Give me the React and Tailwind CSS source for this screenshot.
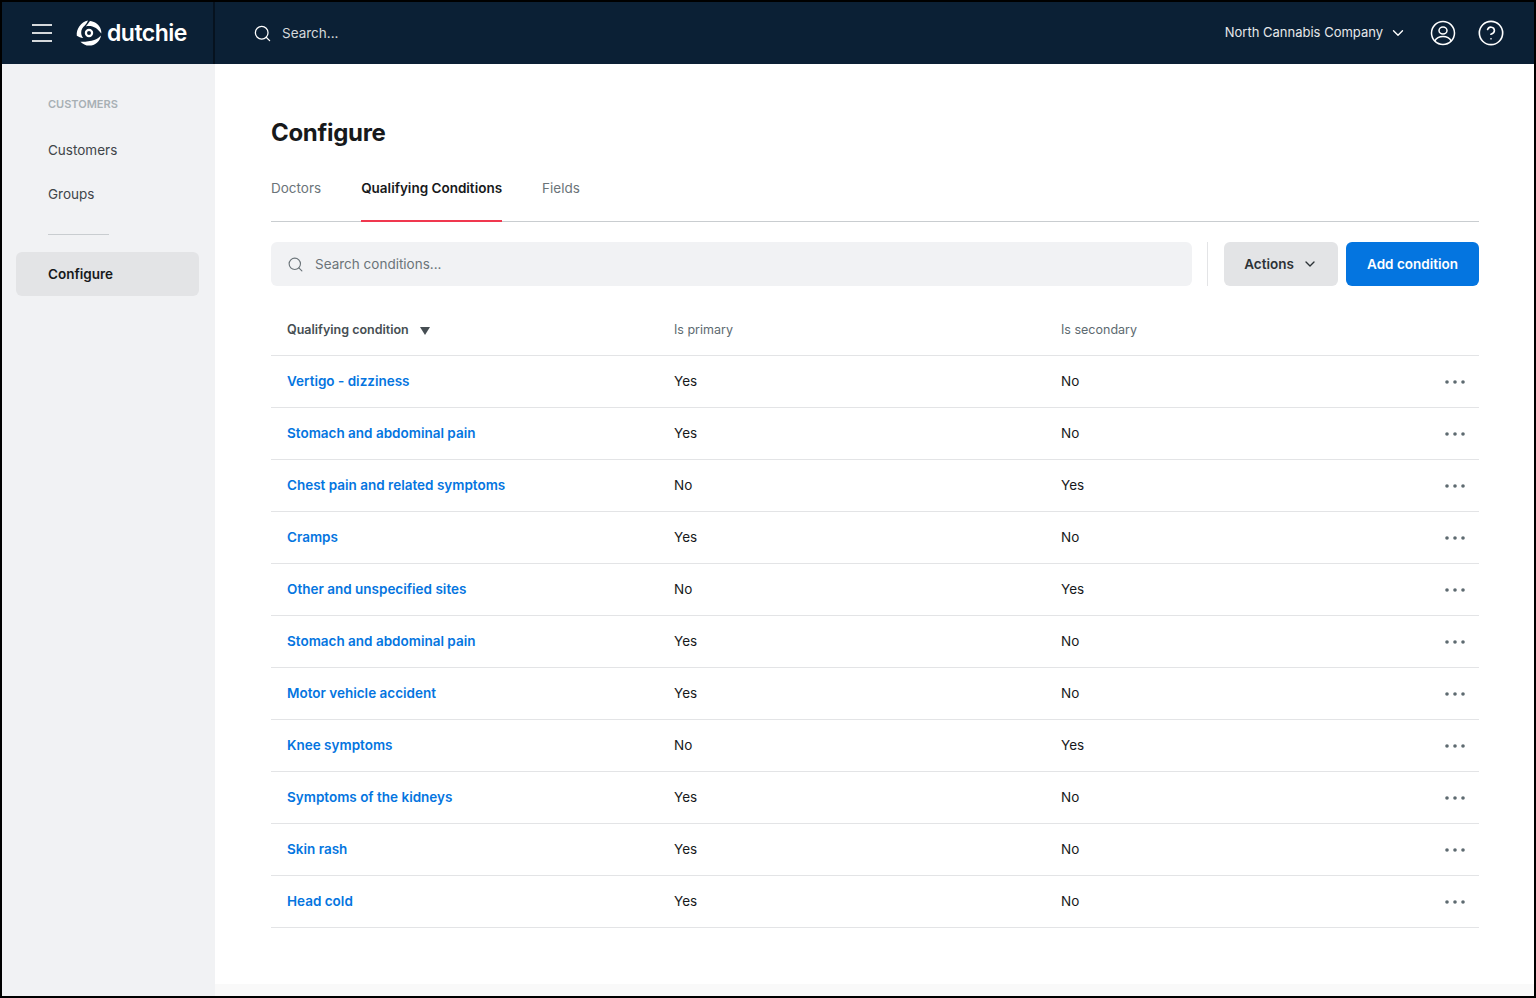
import React from 'react'
import { Search, ChevronDown, CircleHelp } from 'lucide-react'

const rows = [
  ['Vertigo - dizziness', 'Yes', 'No'],
  ['Stomach and abdominal pain', 'Yes', 'No'],
  ['Chest pain and related symptoms', 'No', 'Yes'],
  ['Cramps', 'Yes', 'No'],
  ['Other and unspecified sites', 'No', 'Yes'],
  ['Stomach and abdominal pain', 'Yes', 'No'],
  ['Motor vehicle accident', 'Yes', 'No'],
  ['Knee symptoms', 'No', 'Yes'],
  ['Symptoms of the kidneys', 'Yes', 'No'],
  ['Skin rash', 'Yes', 'No'],
  ['Head cold', 'Yes', 'No'],
]

const Logo = () => (
  <svg width="26" height="26" viewBox="0 0 26 26" fill="#fff">
    <path d="M12 .6C11 2.6 10.400 4 8.800 5.400 6.600 7.200 5 9.800 5.200 13c.1 2 .9 3.700 2 5C4.800 18 2.600 17 .8 15.800.1 9.400 4.800 1.800 12 .6Z" />
    <path d="M14 1c4.200.3 8.200 3 10 6.600 1 2 1.500 4 1.300 6-1.300-1.700-2.600-3.300-3.900-4.300C19.600 7.800 17 6.400 14.600 6.100c-2-.3-3.300-.2-4.800.3C11.500 4.500 12.600 2.800 14 1Z" />
    <path d="M25 15.400c-.8 5.800-6 10.200-11.800 10.200-3.400 0-6.600-1.500-8.800-3.900 2.800.3 5.300-.1 7.800-.5 2.200-.4 4.600-.4 6.700-1.400 2.400-1.100 4.400-2.600 6.100-4.400Z" />
    <circle cx="13" cy="13" r="3.100" fill="none" stroke="#fff" strokeWidth="2.200" />
  </svg>
)

const UserCircle = () => (
  <svg width="26" height="26" viewBox="0 0 26 26" fill="none" stroke="#fff" strokeWidth="1.500">
    <circle cx="13" cy="13" r="11.500" />
    <ellipse cx="13" cy="10.500" rx="4" ry="3.500" />
    <path d="M4.800 20.800c1.500-2.800 4.500-4.300 8.200-4.300s6.700 1.500 8.200 4.300" />
  </svg>
)

const Dots = () => (
  <svg width="20" height="4" viewBox="0 0 20 4" fill="#5d6a70">
    <circle cx="2" cy="2" r="1.800" />
    <circle cx="10" cy="2" r="1.800" />
    <circle cx="18" cy="2" r="1.800" />
  </svg>
)

export default function App() {
  return (
    <div className="h-[998px] border-2 border-black bg-white flex flex-col overflow-hidden font-['Inter',sans-serif] text-[14px]">
      <header className="h-[62px] shrink-0 bg-[#0b2035] flex items-center text-white">
        <div className="w-[213px] h-full shrink-0 border-r-2 border-[#06121f] flex items-center pl-[30px]">
          <div className="w-5 flex flex-col gap-[6px]">
            <span className="h-[2px] bg-[#d5d9dc]" />
            <span className="h-[2px] bg-[#d5d9dc]" />
            <span className="h-[2px] bg-[#d5d9dc]" />
          </div>
          <div className="ml-[24px] flex items-center gap-[5px]">
            <Logo />
            <span className="text-[23px] font-semibold tracking-[-0.5px] leading-none">dutchie</span>
          </div>
        </div>
        <div className="flex-1 flex items-center pl-[38px] pr-[29px]">
          <Search size={19} strokeWidth={1.600} />
          <span className="ml-[10px] text-[13.500px] text-[#d5d9dc]">Search...</span>
          <div className="ml-auto flex items-center">
            <span className="text-[13px] text-[#e6e8ea]">North Cannabis Company</span>
            <ChevronDown size={18} strokeWidth={1.800} className="ml-[6px]" />
            <span className="ml-[23px] flex"><UserCircle /></span>
            <CircleHelp size={28} strokeWidth={1.400} className="ml-[21px]" />
          </div>
        </div>
      </header>

      <div className="flex-1 flex min-h-0">
        <aside className="w-[213px] shrink-0 bg-[#f1f2f4] px-[14px] pt-[32px]">
          <div className="pl-[32px] text-[11px] leading-[16px] font-semibold text-[#a8b0b4]">CUSTOMERS</div>
          <div className="pl-[32px] mt-[16px] h-[44px] flex items-center text-[#3f4549] text-[13.500px]">Customers</div>
          <div className="pl-[32px] h-[44px] flex items-center text-[#3f4549] text-[13.500px]">Groups</div>
          <div className="ml-[32px] mt-[18px] w-[61px] h-px bg-[#c9cdd0]" />
          <div className="mt-[17px] h-[44px] w-[183px] rounded-[6px] bg-[#e3e4e6] pl-[32px] flex items-center text-[#17191b] text-[13.500px] font-semibold">Configure</div>
        </aside>

        <main className="flex-1 flex flex-col min-w-0">
          <div className="flex-1 pl-[56px] pr-[55px]">
            <h1 className="mt-[52px] text-[24px] leading-[34px] font-bold tracking-[-0.3px] text-[#17191b]">Configure</h1>
            <nav className="mt-[23px] flex gap-[40px] border-b border-[#c9cdd0] h-[49px] text-[13.500px]">
              <span className="pt-[5px] text-[#6b7479]">Doctors</span>
              <span className="pt-[5px] h-[49px] border-b-2 border-[#f0384f] font-semibold text-[#17191b]">Qualifying Conditions</span>
              <span className="pt-[5px] text-[#6b7479]">Fields</span>
            </nav>

            <div className="mt-[20px] flex items-center">
              <div className="flex-1 h-[44px] rounded-[6px] bg-[#f1f2f4] flex items-center pl-4">
                <Search size={17} strokeWidth={1.600} className="text-[#6b7479]" />
                <span className="ml-[11px] text-[13.500px] text-[#6b7479]">Search conditions...</span>
              </div>
              <div className="ml-[15px] w-px h-[44px] bg-[#e3e4e6]" />
              <button className="ml-4 h-[44px] w-[114px] rounded-[6px] bg-[#e3e4e6] flex items-center justify-center text-[13.500px] font-semibold text-[#2c3236]">
                Actions
                <ChevronDown size={16} strokeWidth={2} className="ml-[8px]" />
              </button>
              <button className="ml-2 h-[44px] w-[133px] rounded-[6px] bg-[#0475e0] text-white text-[13.500px] font-semibold">Add condition</button>
            </div>

            <div className="mt-[20px] h-[50px] border-b border-[#e3e4e6] grid grid-cols-[387px_387px_1fr] items-center px-4 text-[12.500px] text-[#5d6a70]">
              <div className="flex items-center font-semibold text-[#464e53]">
                Qualifying condition
                <span className="ml-[11px] w-0 h-0 border-x-[5.500px] border-x-transparent border-t-[8px] border-t-[#464e53]" />
              </div>
              <div>Is primary</div>
              <div>Is secondary</div>
            </div>

            {rows.map((r, i) => (
              <div key={i} className="h-[52px] border-b border-[#e3e4e6] grid grid-cols-[387px_387px_1fr_auto] items-center pl-4 pr-[14px] text-[13.500px] text-[#17191b]">
                <a className="font-semibold text-[#0475e0]">{r[0]}</a>
                <div>{r[1]}</div>
                <div>{r[2]}</div>
                <Dots />
              </div>
            ))}
          </div>
          <div className="h-3 shrink-0 bg-[#f9f9f9]" />
        </main>
      </div>
    </div>
  )
}
